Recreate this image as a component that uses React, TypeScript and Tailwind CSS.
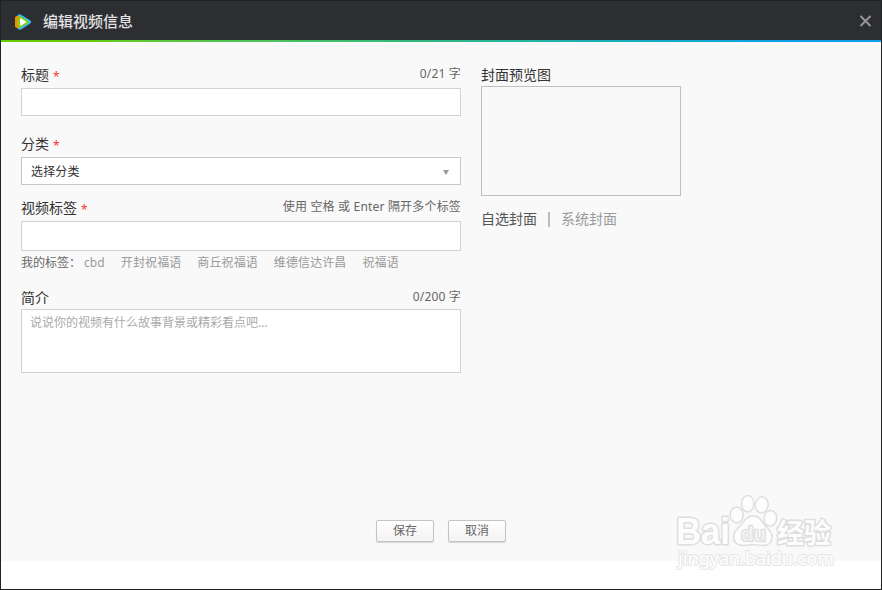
import { useState } from 'react'
import type { ReactNode } from 'react'

const MY_TAGS = ['cbd', '开封祝福语', '商丘祝福语', '维德信达许昌', '祝福语']

function Logo() {
    return (
        <svg width="17" height="16" viewBox="0 0 17 16">
            <path d="M2.500 1C3.500 0 5 .1 6.500 1l8.500 5.300c1.500 1 1.500 2.400 0 3.400L7 15c-1.500.9-3 1-4.500 0Z" fill="#35b6f2" />
            <path d="M0 4C.2 2.200 1.500 1.800 3 2h2v12H3c-1.500.1-2.800-.5-3-2Z" fill="#ff8a00" />
            <path d="M2.500 4.200c.1-1.700 1.500-2.400 3-1.600l7.300 4c1.300.8 1.300 2 0 2.800l-7.300 4c-1.500.8-2.900.1-3-1.600Z" fill="#86cc1c" />
            <path d="M5 5.300c0-.8.600-1 1.200-.7l4.600 2.800c.6.300.6.900 0 1.200l-4.600 2.800c-.6.300-1.200.1-1.200-.7Z" fill="#fff" />
        </svg>
    )
}

function FieldLabel({ text, required, hint }: { text: string; required?: boolean; hint?: string }) {
    return (
        <div className="flex h-[22px] items-start justify-between">
            <label className="flex gap-1 text-sm leading-[22px] text-[#333]">
                {text}
                {required && <span className="text-xs leading-[26px] text-[#f33]">*</span>}
            </label>
            {hint && <span className="text-xs leading-5 tracking-[0.18px] text-[#666]">{hint}</span>}
        </div>
    )
}

function ActionButton({ children }: { children: ReactNode }) {
    return (
        <button className="h-[22px] w-[58px] rounded-[2px] border border-[#c4c4c4] bg-linear-to-b from-white to-[#f3f3f3] text-xs leading-5 text-[#666] shadow-[0_1px_1px_rgba(0,0,0,0.15)]">
            {children}
        </button>
    )
}

function Watermark() {
    return (
        <svg
            className="pointer-events-none absolute top-[489px] left-[671px]"
            width="170"
            height="84"
            viewBox="0 0 170 84"
            fill="#fdfdfd"
            stroke="#dedede"
            strokeWidth="1.5"
            paintOrder="stroke"
            strokeLinejoin="round"
        >
            <text
                x="4"
                y="54"
                fontFamily="'Liberation Sans', sans-serif"
                fontWeight="700"
                fontSize="36"
                strokeWidth="3"
                textLength="54"
                lengthAdjust="spacingAndGlyphs"
            >
                Bai
            </text>
            <g paintOrder="normal">
                <ellipse cx="64.700" cy="25" rx="6.500" ry="7.900" />
                <ellipse cx="75.700" cy="13.700" rx="6.200" ry="8.200" />
                <ellipse cx="89.700" cy="14.800" rx="6.400" ry="8" transform="rotate(10 89.700 14.800)" />
                <ellipse cx="98.300" cy="28.300" rx="6.400" ry="7.900" transform="rotate(6 98.300 28.300)" />
                <path d="M81.500 26c-6.500 0-9 4.500-12.500 9-3.500 4-7.500 6.500-7.500 12 0 6 4.500 8.500 9 8.500 4 0 7-.8 11-.8s6.500.8 10 .8c5 0 8.500-3 8.500-8.500s-4-8-7.500-12c-3.500-4.500-5-9-11-9Z" />
            </g>
            <text
                x="69"
                y="50.500"
                fontFamily="'Liberation Sans', sans-serif"
                fontWeight="700"
                fontSize="20"
                strokeWidth="2.400"
                fill="#f1f1f1"
                textLength="25"
                lengthAdjust="spacingAndGlyphs"
            >
                du
            </text>
            <text
                x="105"
                y="53"
                fontFamily="'Noto Sans CJK SC', sans-serif"
                fontWeight="700"
                fontSize="27"
                strokeWidth="3"
                textLength="54"
                lengthAdjust="spacingAndGlyphs"
            >
                经验
            </text>
            <text
                x="6"
                y="75"
                fontFamily="'Noto Sans', sans-serif"
                fontWeight="500"
                fontSize="18"
                strokeWidth="2"
                stroke="#e6e6e6"
                textLength="156"
                lengthAdjust="spacingAndGlyphs"
            >
                jingyan.baidu.com
            </text>
        </svg>
    )
}

export default function App() {
    const [title, setTitle] = useState('')
    const [tags, setTags] = useState('')
    const [intro, setIntro] = useState('')

    return (
        <div className="relative flex h-[590px] w-[882px] flex-col border border-[#212123] bg-white font-['Noto_Sans','Noto_Sans_CJK_SC',sans-serif]">
            <header className="flex h-[39px] shrink-0 items-center bg-[#2d2e32] pt-0.5 pr-[9px] pl-3.5">
                <Logo />
                <h1 className="ml-[11px] text-[15px] font-medium text-[#e2e2e2]">编辑视频信息</h1>
                <button className="ml-auto" aria-label="关闭">
                    <svg width="13" height="13" viewBox="0 0 13 13" stroke="#96969a" strokeWidth="2">
                        <path d="M1.500 1l10 10M11.500 1l-10 10" />
                    </svg>
                </button>
            </header>
            <div className="h-0.5 shrink-0 bg-linear-to-r from-[#66cc00] from-10% via-[#35b978] via-45% to-[#10a0e8] to-90%" />

            <main className="flex h-[519px] shrink-0 flex-col bg-[#f9f9f9] px-5 pt-[22px]">
                <div className="flex gap-5">
                    <section className="flex w-[440px] flex-col">
                        <FieldLabel text="标题" required hint={`${title.length}/21 字`} />
                        <input
                            className="mt-0.5 h-7 border border-[#d2d2d2] bg-white px-2 text-xs outline-none"
                            maxLength={21}
                            value={title}
                            onChange={(e) => setTitle(e.target.value)}
                        />

                        <div className="mt-[17px]">
                            <FieldLabel text="分类" required />
                        </div>
                        <button className="mt-0.5 flex h-7 items-center justify-between border border-[#c8c8c8] bg-white pt-0.5 pr-[11px] pl-[9px] text-xs tracking-[0.18px] text-[#333]">
                            选择分类
                            <svg width="6" height="5" viewBox="0 0 6 5" fill="#999">
                                <path d="M0 0h6L3 5Z" />
                            </svg>
                        </button>

                        <div className="mt-3">
                            <FieldLabel text="视频标签" required hint="使用 空格 或 Enter 隔开多个标签" />
                        </div>
                        <input
                            className="mt-0.5 h-[30px] border border-[#d2d2d2] bg-white px-2 text-xs outline-none"
                            value={tags}
                            onChange={(e) => setTags(e.target.value)}
                        />
                        <div className="mt-0.5 flex text-xs leading-5 text-[#999]">
                            <span className="w-[63px] text-[#666]">我的标签：</span>
                            <div className="flex gap-4 tracking-[0.1px]">
                                {MY_TAGS.map((tag) => (
                                    <span key={tag} onClick={() => setTags(`${tags} ${tag}`.trim())}>
                                        {tag}
                                    </span>
                                ))}
                            </div>
                        </div>

                        <div className="mt-3.5">
                            <FieldLabel text="简介" hint={`${intro.length}/200 字`} />
                        </div>
                        <textarea
                            className="h-16 resize-none border border-[#d2d2d2] bg-white px-2 py-1 text-xs leading-[18px] outline-none placeholder:text-[#aaa]"
                            maxLength={200}
                            placeholder="说说你的视频有什么故事背景或精彩看点吧..."
                            value={intro}
                            onChange={(e) => setIntro(e.target.value)}
                        />
                    </section>

                    <section className="w-[200px]">
                        <h2 className="text-sm leading-[22px] text-[#333]">封面预览图</h2>
                        <div className="h-[110px] border border-[#bfbfbf]" />
                        <div className="mt-3 flex items-center text-sm leading-[22px] text-[#999]">
                            <span className="text-[#555]">自选封面</span>
                            <span className="mr-[11px] ml-[11px] h-[15px] w-0.5 bg-[#bbb]" />
                            <span>系统封面</span>
                        </div>
                    </section>
                </div>

                <footer className="mt-auto mb-[19px] flex justify-center gap-3.5">
                    <ActionButton>保存</ActionButton>
                    <ActionButton>取消</ActionButton>
                </footer>
            </main>

            <Watermark />
        </div>
    )
}
